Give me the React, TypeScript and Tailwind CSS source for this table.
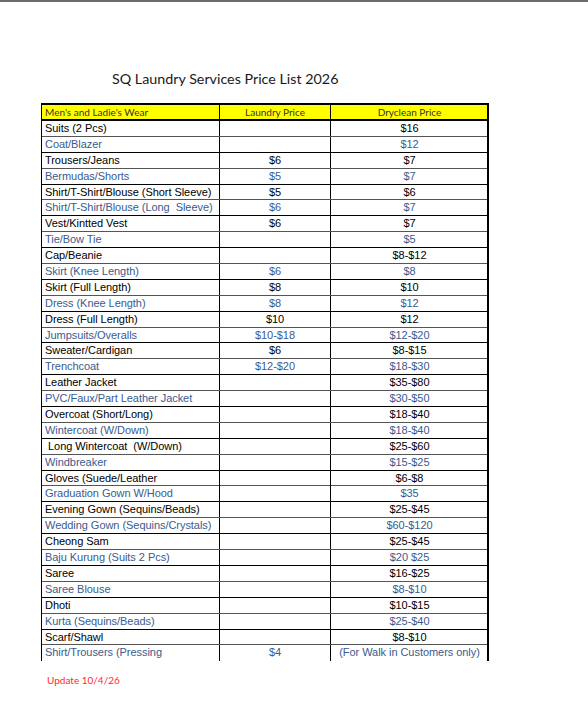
const rows: [string, string, string, boolean][] = [
  ["Suits (2 Pcs)", "", "$16", false],
  ["Coat/Blazer", "", "$12", true],
  ["Trousers/Jeans", "$6", "$7", false],
  ["Bermudas/Shorts", "$5", "$7", true],
  ["Shirt/T-Shirt/Blouse (Short Sleeve)", "$5", "$6", false],
  ["Shirt/T-Shirt/Blouse (Long  Sleeve)", "$6", "$7", true],
  ["Vest/Kintted Vest", "$6", "$7", false],
  ["Tie/Bow Tie", "", "$5", true],
  ["Cap/Beanie", "", "$8-$12", false],
  ["Skirt (Knee Length)", "$6", "$8", true],
  ["Skirt (Full Length)", "$8", "$10", false],
  ["Dress (Knee Length)", "$8", "$12", true],
  ["Dress (Full Length)", "$10", "$12", false],
  ["Jumpsuits/Overalls", "$10-$18", "$12-$20", true],
  ["Sweater/Cardigan", "$6", "$8-$15", false],
  ["Trenchcoat", "$12-$20", "$18-$30", true],
  ["Leather Jacket", "", "$35-$80", false],
  ["PVC/Faux/Part Leather Jacket", "", "$30-$50", true],
  ["Overcoat (Short/Long)", "", "$18-$40", false],
  ["Wintercoat (W/Down)", "", "$18-$40", true],
  ["\u00a0Long Wintercoat \u00a0(W/Down)", "", "$25-$60", false],
  ["Windbreaker", "", "$15-$25", true],
  ["Gloves (Suede/Leather", "", "$6-$8", false],
  ["Graduation Gown W/Hood", "", "$35", true],
  ["Evening Gown (Sequins/Beads)", "", "$25-$45", false],
  ["Wedding Gown (Sequins/Crystals)", "", "$60-$120", true],
  ["Cheong Sam", "", "$25-$45", false],
  ["Baju Kurung (Suits 2 Pcs)", "", "$20 $25", true],
  ["Saree", "", "$16-$25", false],
  ["Saree Blouse", "", "$8-$10", true],
  ["Dhoti", "", "$10-$15", false],
  ["Kurta (Sequins/Beads)", "", "$25-$40", true],
  ["Scarf/Shawl", "", "$8-$10", false],
  ["Shirt/Trousers (Pressing", "$4", "(For Walk in Customers only)", true],
];

const cols = "grid grid-cols-[178px_111px_157px]";

export default function App() {
  return (
    <div className="min-h-[720px] w-[588px] bg-white border-t-2 border-[#6b6b6b]">
      <h1 className="ml-[112px] mt-[67px] text-[14.3px] leading-[20px] text-[#1a1a1a] [font-family:Lato,'Open_Sans',sans-serif]">
        SQ Laundry Services Price List 2026
      </h1>

      <div className="ml-[41px] mt-[14px] w-[448px] border-l border-r-2 border-t-2 border-black [font-family:'Liberation_Sans',Arial,sans-serif]">
        <div className={`${cols} h-[16px] bg-[#ffff00] border-b-2 border-black text-[10px] leading-[14px] text-[#333] [font-family:Lato,sans-serif]`}>
          <div className="border-r border-black pl-[3px]">Men's and Ladie's Wear</div>
          <div className="border-r border-black text-center">Laundry Price</div>
          <div className="text-center">Dryclean Price</div>
        </div>

        {rows.map(([item, laundry, dry, blue], i) => (
          <div
            key={i}
            className={`${cols} h-[15.9px] text-[11px] leading-[14.9px] tracking-[-0.05px] ${
              i === rows.length - 1 ? "" : "border-b"
            } ${blue ? "text-[#3a5b8e] border-black" : "text-black border-[#555]"}`}
          >
            <div className="border-r border-black pl-[3px] whitespace-pre overflow-hidden">{item}</div>
            <div className="border-r border-black text-center">{laundry}</div>
            <div className="text-center whitespace-nowrap">{dry}</div>
          </div>
        ))}
      </div>

      <p className="ml-[47px] mt-[12px] text-[10px] text-[#ff2a2a] [font-family:Lato,sans-serif]">Update 10/4/26</p>
    </div>
  );
}
